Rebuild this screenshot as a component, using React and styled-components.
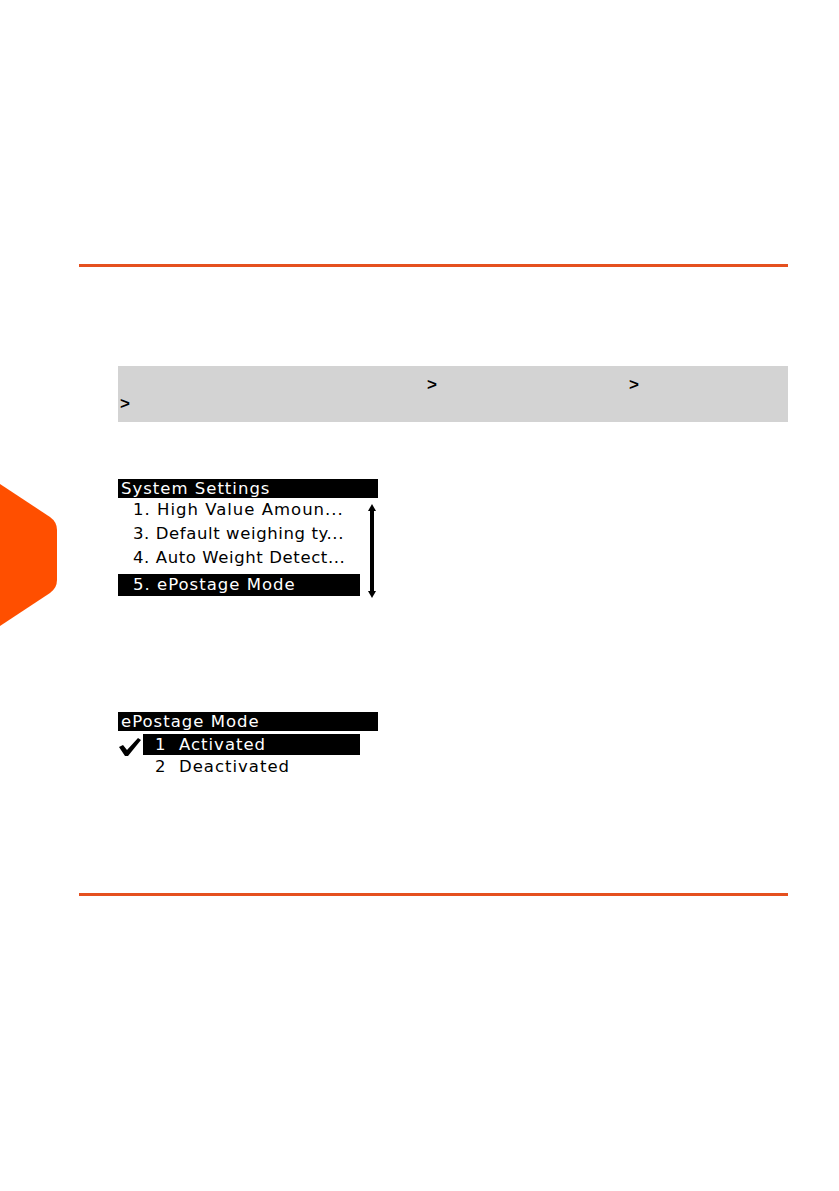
import styled, {createGlobalStyle} from "styled-components"

const GlobalStyle = createGlobalStyle`
    html, body {
        margin : 0;
        padding : 0;
        background : #ffffff;
    }
    body {
        font-family : "Liberation Sans", Arial, sans-serif;
        color : #000;
    }
`;

const Page = styled.div`
    position : relative;
    width : 839px;
    height : 1191px;
    overflow : hidden;
    background : #fff;
`;

const Content = styled.div`
    padding : 264px 51px 0 79px;
    display : flex;
    flex-direction : column;
`;

const Rule = styled.div`
    height : 3px;
    background-color : #e5501f;
    margin-top : ${p => p.top || 0}px;
`;

const PathBox = styled.div`
    margin : 99px 0 0 39px;
    height : 56px;
    background-color : #d3d3d3;
    display : flex;
    flex-direction : column;
    justify-content : center;
    font-size : 17px;
    font-weight : bold;
    line-height : 19px;
`;

const PathLine = styled.div`
    display : flex;
    height : 19px;
`;

const Arrow = styled.span`
    width : ${p => p.w}px;
    flex-shrink : 0;
    text-align : right;
`;

const Screen = styled.div`
    margin : ${p => p.top}px 0 0 39px;
    width : 260px;
    font-family : "DejaVu Sans", sans-serif;
    font-size : 16.5px;
    letter-spacing : 1px;
`;

const Header = styled.div`
    background : #000;
    color : #fff;
    height : 19px;
    line-height : 19px;
    padding-left : 3px;
    white-space : nowrap;
`;

const Body = styled.div`
    display : flex;
    align-items : flex-start;
`;

const List = styled.div`
    width : 242px;
    display : flex;
    flex-direction : column;
`;

const Item = styled.div`
    height : ${p => p.active ? 22 : 24}px;
    line-height : ${p => p.active ? 22 : 24}px;
    margin-top : ${p => p.active ? 4 : 0}px;
    padding-left : 15px;
    background : ${p => p.active ? "#000" : "transparent"};
    color : ${p => p.active ? "#fff" : "#000"};
    white-space : nowrap;
    letter-spacing : ${p => p.tight ? 0.6 : 1}px;
`;

const Scroll = styled.div`
    margin-left : 7px;
    padding-top : 6px;
    height : 94px;
`;

const ChoiceRow = styled.div`
    display : flex;
    align-items : center;
    height : ${p => p.h}px;
    margin-top : ${p => p.gap || 0}px;
`;

const Tick = styled.div`
    width : 25px;
    display : flex;
    align-items : center;
    padding-top : 4px;
`;

const Choice = styled.div`
    width : 217px;
    height : 100%;
    line-height : ${p => p.h}px;
    padding-left : 12px;
    box-sizing : border-box;
    background : ${p => p.active ? "#000" : "transparent"};
    color : ${p => p.active ? "#fff" : "#000"};
    white-space : pre;
`;

const SideTab = styled.svg`
    position : absolute;
    left : 0;
    top : 484px;
`;

function ScrollBar() {
    return (
        <Scroll>
            <svg width="10" height="94" viewBox="0 0 10 94" style={{display : "block"}}>
                <path d="M5 0 L9 7 L1 7 Z" fill="#000"/>
                <rect x="3" y="5" width="4" height="84" fill="#000"/>
                <path d="M5 94 L9 87 L1 87 Z" fill="#000"/>
            </svg>
        </Scroll>
    )
}

function App() {
    return (
        <Page>
            <GlobalStyle/>
            <SideTab width="60" height="142" viewBox="0 0 60 142">
                <path d="M0 0 L50 33 Q57 38 57 46 L57 96 Q57 104 50 109 L0 142 Z" fill="#ff4f00"/>
            </SideTab>
            <Content>
                <Rule/>
                <PathBox>
                    <PathLine>
                        <Arrow w={319}>&gt;</Arrow>
                        <Arrow w={202}>&gt;</Arrow>
                    </PathLine>
                    <PathLine>
                        <Arrow w={12}>&gt;</Arrow>
                    </PathLine>
                </PathBox>
                <Screen top={57}>
                    <Header>System Settings</Header>
                    <Body>
                        <List>
                            <Item>1. High Value Amoun...</Item>
                            <Item tight>3. Default weighing ty...</Item>
                            <Item tight>4. Auto Weight Detect...</Item>
                            <Item active>5. ePostage Mode</Item>
                        </List>
                        <ScrollBar/>
                    </Body>
                </Screen>
                <Screen top={114}>
                    <Header>ePostage Mode</Header>
                    <ChoiceRow h={21} gap={3}>
                        <Tick>
                            <svg width="24" height="18" viewBox="0 0 24 18">
                                <path d="M1 9 L5 7 L9 12 L20 0 L23 2 L10 18 L7 18 Z" fill="#000"/>
                            </svg>
                        </Tick>
                        <Choice h={21} active>{"1  Activated"}</Choice>
                    </ChoiceRow>
                    <ChoiceRow h={24}>
                        <Tick/>
                        <Choice h={24}>{"2  Deactivated"}</Choice>
                    </ChoiceRow>
                </Screen>
                <Rule top={114}/>
            </Content>
        </Page>
    )
}

export default App
